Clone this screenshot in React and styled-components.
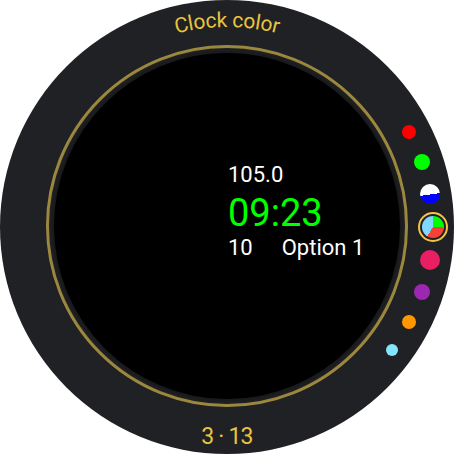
import React from "react";
import styled, { createGlobalStyle } from "styled-components";

const GlobalStyle = createGlobalStyle`
  html, body {
    margin: 0;
    padding: 0;
    background: #fff;
  }
  body {
    font-family: Roboto, "Noto Sans", sans-serif;
  }
`;

const SIZE = 454;
const CENTER = SIZE / 2;

const Face = styled.div`
  position: relative;
  width: ${SIZE}px;
  height: ${SIZE}px;
  border-radius: 50%;
  background: #202124;
  display: flex;
  align-items: center;
  justify-content: center;
  overflow: hidden;
`;

const GoldRing = styled.div`
  width: 362px;
  height: 362px;
  margin-top: -2px;
  box-sizing: border-box;
  border-radius: 50%;
  border: 3px solid #9e8a3f;
  display: flex;
  align-items: center;
  justify-content: center;
`;

const Screen = styled.div`
  width: 346px;
  height: 346px;
  box-sizing: border-box;
  border-radius: 50%;
  background: #000;
  box-shadow: 0 0 4px 2px #18181b;
  display: flex;
  flex-direction: column;
  align-items: flex-start;
  padding: 109px 0 0 174px;
  color: #fff;
`;

const Line = styled.div`
  font-size: ${(p) => p.$size}px;
  line-height: ${(p) => p.$lh}px;
  color: ${(p) => p.$color || "#fff"};
  margin-top: ${(p) => p.$gap || 0}px;
  display: flex;
  gap: 29px;
  white-space: nowrap;
`;

const Arc = styled.svg`
  position: absolute;
  left: 0;
  top: 0;
  pointer-events: none;
`;

const Footer = styled.div`
  position: absolute;
  left: 0;
  right: 0;
  bottom: 4px;
  text-align: center;
  font-size: 23px;
  line-height: 26px;
  letter-spacing: -0.8px;
  color: #e8c341;
`;

const Dot = styled.div`
  position: absolute;
  width: ${(p) => p.$size}px;
  height: ${(p) => p.$size}px;
  margin-left: ${(p) => -p.$size / 2}px;
  margin-top: ${(p) => -p.$size / 2}px;
  border-radius: 50%;
  background: ${(p) => p.$fill};
`;

const Selected = styled.div`
  position: absolute;
  width: 30px;
  height: 30px;
  margin-left: -15px;
  margin-top: -15px;
  box-sizing: border-box;
  border-radius: 50%;
  border: 2px solid #f2c44a;
  display: flex;
  align-items: center;
  justify-content: center;
`;

const Pie = styled.div`
  width: 22px;
  height: 22px;
  border-radius: 50%;
  background: conic-gradient(#00ff00 0deg 93deg, #f44336 93deg 212deg, #80d8ff 212deg 360deg);
`;

const swatches = [
  { size: 14, fill: "#ff0000" },
  { size: 16, fill: "#00ff00" },
  { size: 20, fill: "linear-gradient(172deg, #fff 0 52%, #0000ff 52% 100%)" },
  { selected: true },
  { size: 20, fill: "#e91e63" },
  { size: 16, fill: "#9c27b0" },
  { size: 14, fill: "#ff9800" },
  { size: 12, fill: "#84e4ff" },
];

function place(i) {
  const deg = (i - 3) * 9.2;
  const rad = (deg * Math.PI) / 180;
  const r = 205.5;
  return { left: CENTER + r * Math.cos(rad), top: CENTER + r * Math.sin(rad) };
}

export default function App() {
  const r = 200;
  const arcPath = `M ${CENTER - r} ${CENTER} A ${r} ${r} 0 0 1 ${CENTER + r} ${CENTER}`;
  return (
    <>
      <GlobalStyle />
      <Face>
        <GoldRing>
          <Screen>
            <Line $size={22} $lh={26}>105.0</Line>
            <Line $size={38} $lh={44} $gap={2.5} $color="#00ff00">09:23</Line>
            <Line $size={22} $lh={26}>
              <span>10</span>
              <span>Option 1</span>
            </Line>
          </Screen>
        </GoldRing>

        <Arc width={SIZE} height={SIZE} viewBox={`0 0 ${SIZE} ${SIZE}`}>
          <defs>
            <path id="topArc" d={arcPath} fill="none" />
          </defs>
          <text fill="#e9c53f" fontSize="21" fontFamily="Roboto, sans-serif" letterSpacing="-0.2">
            <textPath href="#topArc" startOffset="50%" textAnchor="middle">
              Clock color
            </textPath>
          </text>
        </Arc>

        {swatches.map((s, i) =>
          s.selected ? (
            <Selected key={i} style={place(i)}>
              <Pie />
            </Selected>
          ) : (
            <Dot key={i} $size={s.size} $fill={s.fill} style={place(i)} />
          )
        )}

        <Footer>3 · 13</Footer>
      </Face>
    </>
  );
}
